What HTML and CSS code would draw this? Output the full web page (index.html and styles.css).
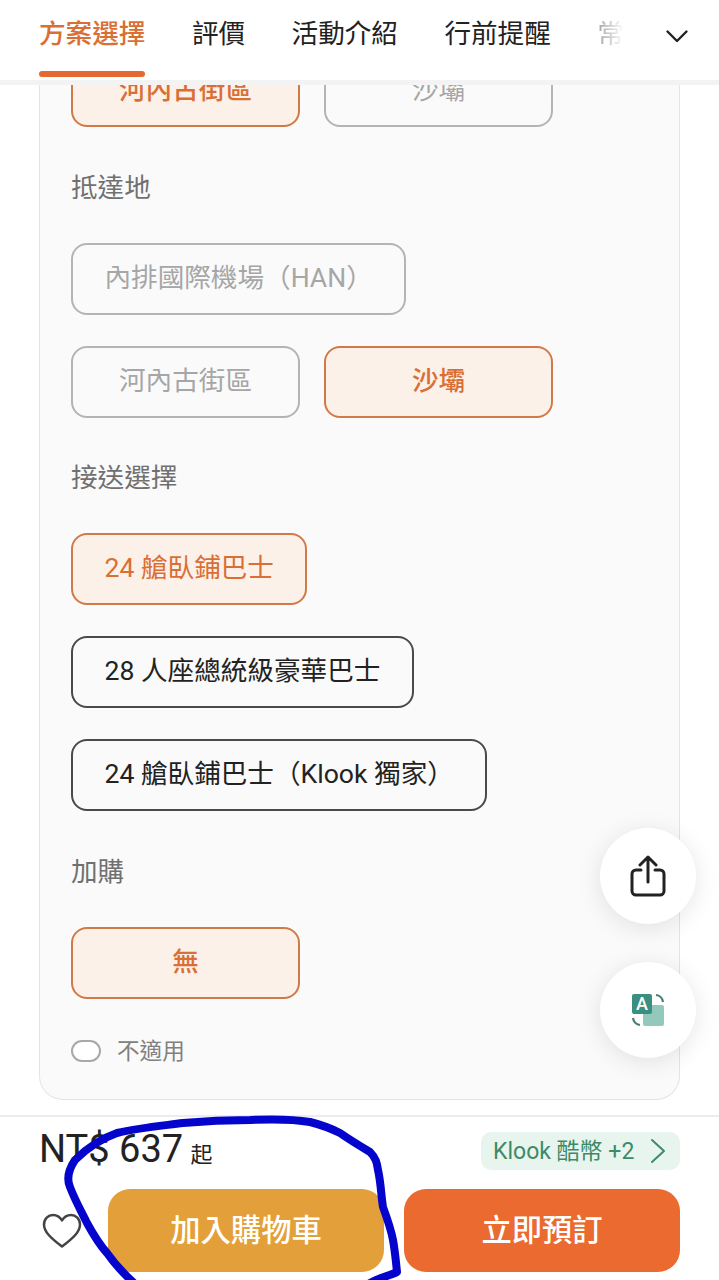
FILE: index.html
```html
<!DOCTYPE html>
<html lang="zh-Hant">
<head>
<meta charset="UTF-8" />
<meta name="viewport" content="width=device-width, initial-scale=1" />
<title>方案選擇</title>
<link rel="stylesheet" href="styles.css">
</head>
<body>
  <header class="tabs">
    <nav class="tab-list">
      <a class="tab active">方案選擇</a>
      <a class="tab">評價</a>
      <a class="tab">活動介紹</a>
      <a class="tab">行前提醒</a>
      <a class="tab">常見問題</a>
    </nav>
    <div class="tab-fade"></div>
    <svg class="tab-more" width="24" height="24" viewBox="0 0 24 24"><path d="M2.500 7.500 12 17 21.500 7.500" fill="none" stroke="#222" stroke-width="2.400" stroke-linecap="round" stroke-linejoin="round"/></svg>
  </header>

  <main class="content">
    <section class="card">
      <div class="chips">
        <span class="chip selected">河內古街區</span>
        <span class="chip disabled">沙壩</span>
      </div>

      <div class="label">抵達地</div>
      <div class="chips">
        <span class="chip disabled">內排國際機場（HAN）</span>
        <span class="chip disabled">河內古街區</span>
        <span class="chip selected">沙壩</span>
      </div>

      <div class="label">接送選擇</div>
      <div class="chips">
        <span class="chip selected regular">24 艙臥鋪巴士</span>
        <span class="chip">28 人座總統級豪華巴士</span>
        <span class="chip">24 艙臥鋪巴士（Klook 獨家）</span>
      </div>

      <div class="label">加購</div>
      <div class="chips">
        <span class="chip selected">無</span>
      </div>

      <div class="toggle-row">
        <span class="toggle"></span>
        <span class="toggle-text">不適用</span>
      </div>
    </section>
  </main>

  <button class="float-btn share" aria-label="分享">
    <svg width="38" height="42" viewBox="0 0 38 42" fill="none" stroke="#222" stroke-width="3" stroke-linecap="round" stroke-linejoin="round">
      <path d="M12 15H7a4 4 0 0 0-4 4v17a4 4 0 0 0 4 4h24a4 4 0 0 0 4-4V19a4 4 0 0 0-4-4h-5"/>
      <path d="M19 27V3M11 10l8-8 8 8"/>
    </svg>
  </button>
  <button class="float-btn translate" aria-label="翻譯">
    <svg width="34" height="34" viewBox="0 0 34 34">
      <rect x="12" y="12" width="21" height="21" rx="2" fill="#93c9bd"/>
      <rect x="1" y="1" width="20" height="20" rx="2" fill="#3a8f80"/>
      <path d="M25 2a8 8 0 0 1 7 7M2 25a8 8 0 0 0 7 7" fill="none" stroke="#4a7d74" stroke-width="2.200"/>
      <text x="11" y="17" class="translate-a">A</text>
    </svg>
  </button>

  <footer class="bottom-bar">
    <div class="price-row">
      <div class="price">NT$ 637 <small>起</small></div>
      <div class="coins">
        <span class="coins-text">Klook 酷幣 +2</span>
        <svg width="16" height="26" viewBox="0 0 16 26"><path d="M2 2 14 13 2 24" fill="none" stroke="#3d8a68" stroke-width="2" stroke-linecap="round" stroke-linejoin="round"/></svg>
      </div>
    </div>
    <div class="action-row">
      <svg class="heart" width="40" height="36" viewBox="0 0 40 36"><path d="M20 33.500C8 24.500 2 18.500 2 11.500 2 6 6.200 2 11 2c3.800 0 7 2 9 5.500C22 4 25.200 2 29 2c4.800 0 9 4 9 9.500 0 7-6 13-18 22Z" fill="none" stroke="#444" stroke-width="2.500" stroke-linejoin="round"/></svg>
      <button class="action cart">加入購物車</button>
      <button class="action book">立即預訂</button>
    </div>
  </footer>

  <svg class="scribble" width="719" height="1280" viewBox="0 0 719 1280">
    <path d="M135 1284C124 1274 114 1263 107 1253 98 1243 93 1234 87 1223 80 1209 74 1198 70 1187 67 1180 67 1172 75 1160 86 1149 100 1139 117 1133 138 1128 160 1126 183 1123 205 1121 228 1120 250 1120 272 1119 292 1119 310 1122 322 1125 330 1128 340 1133 350 1140 360 1146 370 1152 376 1158 377 1163 378 1170 381 1183 381 1195 383 1207 387 1218 391 1229 393 1240 395 1251 396 1262 397 1272 388 1276 380 1278 370 1283" fill="none" stroke="#0404cc" stroke-width="8" stroke-linecap="round" stroke-linejoin="round"/>
  </svg>
</body>
</html>
```

FILE: styles.css
```css
* {
  box-sizing: border-box;
}
html, body {
  margin: 0;
  padding: 0;
}
body {
  position: relative;
  width: 719px;
  height: 1280px;
  overflow: hidden;
  background: white;
  font-family: Roboto, 'Noto Sans CJK TC', sans-serif;
  color: #222;
}
.tabs {
  position: absolute;
  top: 0;
  left: 0;
  right: 0;
  z-index: 5;
  height: 85px;
  display: flex;
  align-items: flex-start;
  padding-left: 39px;
  background: white;
  border-bottom: 5px solid #f3f3f3;
}
.tab-list {
  display: flex;
  gap: 46.500px;
  width: 590px;
  height: 78px;
  overflow: hidden;
}
.tab {
  position: relative;
  flex: none;
  height: 78px;
  padding-top: 14px;
  font-size: 26.600px;
  line-height: 40px;
  color: #222;
}
.tab.active {
  color: #d96f35;
  font-weight: 500;
}
.tab.active::after {
  content: '';
  position: absolute;
  left: 0;
  right: 0;
  bottom: 1px;
  height: 6px;
  border-radius: 3px;
  background: #e56a32;
}
.tab-fade {
  position: absolute;
  left: 585px;
  top: 0;
  width: 60px;
  height: 78px;
  background: linear-gradient(90deg, rgb(255 255 255 / 0.4), white 65%);
}
.tab-more {
  position: absolute;
  left: 665px;
  top: 24px;
}
.content {
  height: 1115px;
  padding: 0 39px;
  overflow: hidden;
}
.card {
  padding: 55px 31px 33.500px;
  background: #fafafa;
  border: 1px solid #e4e4e4;
  border-top: none;
  border-radius: 0 0 24px 24px;
}
.label {
  margin: 40.500px 0 35px;
  font-size: 26.600px;
  line-height: 40px;
  color: #707070;
}
.chips {
  display: flex;
  flex-wrap: wrap;
  gap: 31px 24px;
}
.chip {
  display: flex;
  align-items: center;
  justify-content: center;
  min-width: 229px;
  height: 72px;
  padding: 0 31.500px 7px;
  border: 2px solid #4a4a4a;
  border-radius: 16px;
  font-size: 26.600px;
  white-space: nowrap;
  color: #222;
}
.chip.selected {
  background: #fcf1e9;
  border-color: #d17a48;
  color: #d96f35;
  font-weight: 500;
}
.chip.selected.regular {
  font-weight: 400;
}
.chip.disabled {
  border-color: #b4b4b4;
  color: #a6a6a6;
}
.toggle-row {
  display: flex;
  align-items: center;
  gap: 16px;
  height: 30px;
  margin-top: 37px;
  font-size: 22.600px;
  color: #808080;
}
.toggle-text {
  margin-top: -2px;
}
.toggle {
  width: 30px;
  height: 22px;
  background: white;
  border: 2px solid #a8a8a8;
  border-radius: 11px;
}
.float-btn {
  position: absolute;
  left: 600px;
  width: 96px;
  height: 96px;
  display: flex;
  align-items: center;
  justify-content: center;
  padding: 0;
  border: none;
  border-radius: 50%;
  background: white;
  box-shadow: 0 4px 24px rgb(0 0 0 / 0.1);
}
.share {
  top: 828px;
}
.translate {
  top: 962px;
}
.translate-a {
  font-family: Roboto, sans-serif;
  font-size: 18px;
  font-weight: 500;
  fill: white;
  text-anchor: middle;
}
.bottom-bar {
  height: 165px;
  padding: 0 39px;
  background: white;
  border-top: 2px solid #ececec;
}
.price-row {
  display: flex;
  align-items: center;
  justify-content: space-between;
  height: 72px;
  padding-bottom: 5px;
}
.price {
  margin-top: 3px;
  font-size: 38px;
  font-weight: 400;
  line-height: 44px;
  color: #222;
}
.price small {
  margin-left: -2px;
  font-size: 22px;
}
.coins {
  display: flex;
  align-items: center;
  justify-content: space-between;
  width: 199px;
  height: 38px;
  padding: 0 14px 0 12px;
  border-radius: 10px;
  background: #e8f5ef;
  font-size: 23px;
  color: #3d8a68;
}
.coins-text {
  margin-top: -4px;
}
.action-row {
  display: flex;
  align-items: center;
  gap: 20px;
}
.heart {
  flex: none;
  margin: 0 6px 0 3px;
}
.action {
  flex: 1;
  height: 83px;
  padding: 0 0 6px;
  border: none;
  border-radius: 22px;
  font-family: inherit;
  font-size: 30.300px;
  font-weight: 500;
  color: white;
}
.cart {
  background: #e3a03a;
}
.book {
  background: #ea6a2f;
}
.scribble {
  position: absolute;
  top: 0;
  left: 0;
  z-index: 6;
  pointer-events: none;
}
```
